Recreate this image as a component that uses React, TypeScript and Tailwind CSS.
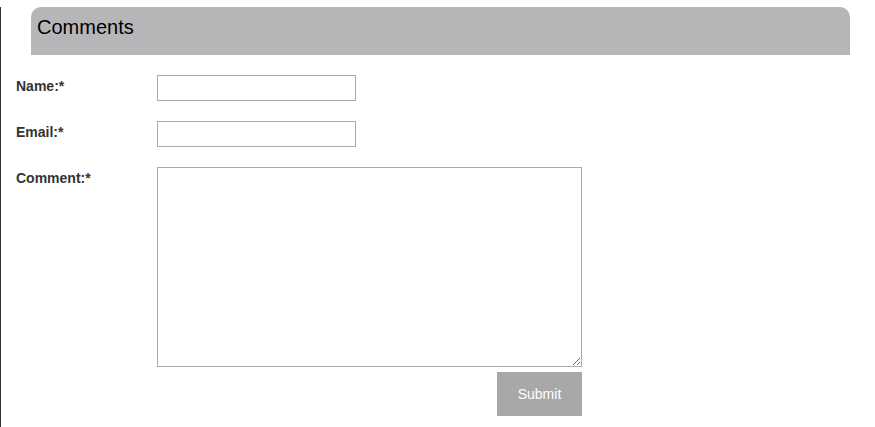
export default function App() {
  return (
    <div className="min-h-[427px] border-l border-[#333] bg-white" style={{ fontFamily: '"Liberation Sans", Arial, sans-serif' }}>
      {/* header bar */}
      <div className="ml-[30px] mt-[7px] flex h-[48px] w-[819px] items-start rounded-t-[10px] bg-[#b6b6b9] px-[6px] pt-[10px]">
        <h2 className="text-[20px] leading-none text-black">Comments</h2>
      </div>

      {/* form */}
      <form className="mt-[20px] flex flex-col gap-5" onSubmit={(e) => e.preventDefault()}>
        <div className="flex">
          <label className="w-[156px] pl-[15px] pt-[1px] text-[14px] font-bold text-[#333]">Name:*</label>
          <input type="text" className="h-[26px] w-[199px] border border-[#aaa] bg-white outline-none" />
        </div>
        <div className="flex">
          <label className="w-[156px] pl-[15px] pt-[1px] text-[14px] font-bold text-[#333]">Email:*</label>
          <input type="text" className="h-[26px] w-[199px] border border-[#aaa] bg-white outline-none" />
        </div>
        <div className="flex">
          <label className="w-[156px] pl-[15px] pt-[1px] text-[14px] font-bold text-[#333]">Comment:*</label>
          <div className="flex flex-col items-end">
            <textarea className="block h-[200px] w-[425px] resize border border-[#aaa] bg-white outline-none" />
            <button type="submit" className="mt-[5px] h-[44px] w-[85px] bg-[#a8a8a8] text-[14px] text-white">
              Submit
            </button>
          </div>
        </div>
      </form>
    </div>
  );
}
